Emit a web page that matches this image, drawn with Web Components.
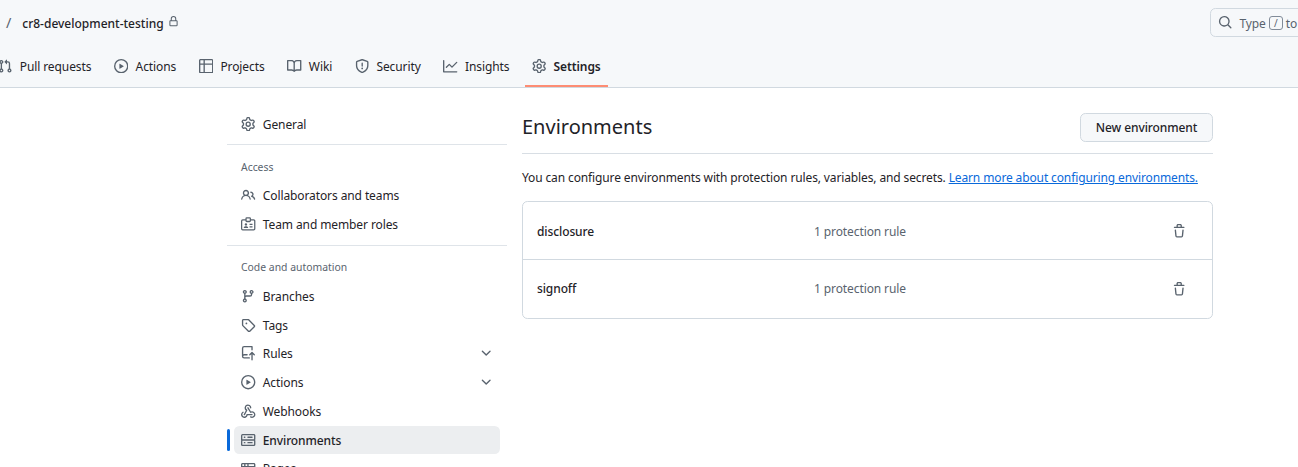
<!DOCTYPE html>
<html>
<head>
<meta charset="utf-8">
<title>Environments</title>
<style>
    html, body { margin: 0; height: 467px; overflow: hidden; background: #fff; }
    body { font: 12px "Noto Sans", sans-serif; letter-spacing: -.1px; color: #1f2328; }
</style>
</head>
<body>
<repo-header>
    <span slot="repo">cr8-development-testing</span>
    <repo-tab icon="pr">Pull requests</repo-tab>
    <repo-tab icon="play">Actions</repo-tab>
    <repo-tab icon="table">Projects</repo-tab>
    <repo-tab icon="book">Wiki</repo-tab>
    <repo-tab icon="shield">Security</repo-tab>
    <repo-tab icon="graph">Insights</repo-tab>
    <repo-tab icon="gear" active>Settings</repo-tab>
</repo-header>
<settings-page>
    <settings-nav slot="nav">
        <nav-item icon="gear">General</nav-item>
        <nav-divider></nav-divider>
        <nav-heading>Access</nav-heading>
        <nav-item icon="people">Collaborators and teams</nav-item>
        <nav-item icon="badge">Team and member roles</nav-item>
        <nav-divider></nav-divider>
        <nav-heading>Code and automation</nav-heading>
        <nav-item icon="branch">Branches</nav-item>
        <nav-item icon="tag">Tags</nav-item>
        <nav-item icon="push" expandable>Rules</nav-item>
        <nav-item icon="play" expandable>Actions</nav-item>
        <nav-item icon="webhook">Webhooks</nav-item>
        <nav-item icon="server" active>Environments</nav-item>
        <nav-item icon="browser">Pages</nav-item>
    </settings-nav>
    <env-panel>
        <env-row name="disclosure" rules="1 protection rule"></env-row>
        <env-row name="signoff" rules="1 protection rule"></env-row>
    </env-panel>
</settings-page>

<script>
const ICONS = {
    gear: '<path d="M8 0a8.2 8.2 0 0 1 .701.031C9.444.095 9.99.645 10.16 1.29l.288 1.107c.018.066.079.158.212.224.231.114.454.243.668.386.123.082.233.09.299.071l1.103-.303c.644-.176 1.392.021 1.82.63.27.385.506.792.704 1.218.315.675.111 1.422-.364 1.891l-.814.806c-.049.048-.098.147-.088.294.016.257.016.515 0 .772-.01.147.038.246.088.294l.814.806c.475.469.679 1.216.364 1.891a7.977 7.977 0 0 1-.704 1.217c-.428.61-1.176.807-1.82.63l-1.102-.302c-.067-.019-.177-.011-.3.071a5.909 5.909 0 0 1-.668.386c-.133.066-.194.158-.211.224l-.29 1.106c-.168.646-.715 1.196-1.458 1.26a8.006 8.006 0 0 1-1.402 0c-.743-.064-1.289-.614-1.458-1.26l-.289-1.106c-.018-.066-.079-.158-.212-.224a5.738 5.738 0 0 1-.668-.386c-.123-.082-.233-.09-.299-.071l-1.103.303c-.644.176-1.392-.021-1.82-.63a8.12 8.12 0 0 1-.704-1.218c-.315-.675-.111-1.422.363-1.891l.815-.806c.05-.048.098-.147.088-.294a6.214 6.214 0 0 1 0-.772c.01-.147-.038-.246-.088-.294l-.815-.806C.635 6.045.431 5.298.746 4.623a7.92 7.92 0 0 1 .704-1.217c.428-.61 1.176-.807 1.82-.63l1.102.302c.067.019.177.011.3-.071.214-.143.437-.272.668-.386.133-.066.194-.158.211-.224l.29-1.106C6.009.645 6.556.095 7.299.03 7.53.01 7.764 0 8 0Zm-.571 1.525c-.036.003-.108.036-.137.146l-.289 1.105c-.147.561-.549.967-.998 1.189-.173.086-.34.183-.5.29-.417.278-.97.423-1.529.27l-1.103-.303c-.109-.03-.175.016-.195.045-.22.312-.412.644-.573.99-.014.031-.021.11.059.19l.815.806c.411.406.562.957.53 1.456a4.709 4.709 0 0 0 0 .582c.032.499-.119 1.05-.53 1.456l-.815.806c-.081.08-.073.159-.059.19.162.346.353.677.573.989.02.03.085.076.195.046l1.102-.303c.56-.153 1.113-.008 1.53.27.161.107.328.204.501.29.447.222.85.629.997 1.189l.289 1.105c.029.109.101.143.137.146a6.6 6.6 0 0 0 1.142 0c.036-.003.108-.036.137-.146l.289-1.105c.147-.561.549-.967.998-1.189.173-.086.34-.183.5-.29.417-.278.97-.423 1.529-.27l1.103.303c.109.029.175-.016.195-.045.22-.313.411-.644.573-.99.014-.031.021-.11-.059-.19l-.815-.806c-.411-.406-.562-.957-.53-1.456a4.709 4.709 0 0 0 0-.582c-.032-.499.119-1.05.53-1.456l.815-.806c.081-.08.073-.159.059-.19a6.464 6.464 0 0 0-.573-.989c-.02-.03-.085-.076-.195-.046l-1.102.303c-.56.153-1.113.008-1.53-.27a4.44 4.44 0 0 0-.501-.29c-.447-.222-.85-.629-.997-1.189l-.289-1.105c-.029-.11-.101-.143-.137-.146a6.6 6.6 0 0 0-1.142 0ZM11 8a3 3 0 1 1-6 0 3 3 0 0 1 6 0ZM9.5 8a1.5 1.5 0 1 0-3.001.001A1.5 1.5 0 0 0 9.5 8Z"/>',
    play: '<path d="M8 0a8 8 0 1 1 0 16A8 8 0 0 1 8 0ZM1.5 8a6.5 6.5 0 1 0 13 0 6.5 6.5 0 0 0-13 0Zm4.879-2.773 4.264 2.559a.25.25 0 0 1 0 .428l-4.264 2.559A.25.25 0 0 1 6 10.559V5.442a.25.25 0 0 1 .379-.215Z"/>',
    table: '<path d="M0 1.75C0 .784.784 0 1.75 0h12.5C15.216 0 16 .784 16 1.75v12.5A1.75 1.75 0 0 1 14.25 16H1.75A1.75 1.75 0 0 1 0 14.25ZM6.5 6.5v8h7.75a.25.25 0 0 0 .25-.25V6.5Zm8-1.5V1.75a.25.25 0 0 0-.25-.25H6.5V5Zm-13 1.5v7.75c0 .138.112.25.25.25H5v-8ZM5 5V1.5H1.75a.25.25 0 0 0-.25.25V5Z"/>',
    book: '<path d="M0 1.75A.75.75 0 0 1 .75 1h4.253c1.227 0 2.317.59 3 1.501A3.743 3.743 0 0 1 11.006 1h4.245a.75.75 0 0 1 .75.75v10.5a.75.75 0 0 1-.75.75h-4.507a2.25 2.25 0 0 0-1.591.659l-.622.621a.75.75 0 0 1-1.06 0l-.622-.621A2.25 2.25 0 0 0 5.258 13H.75a.75.75 0 0 1-.75-.75Zm7.251 10.324.004-5.073-.002-2.253A2.25 2.25 0 0 0 5.003 2.5H1.5v9h3.757a3.75 3.75 0 0 1 1.994.574ZM8.755 4.75l-.004 7.322a3.752 3.752 0 0 1 1.992-.572H14.5v-9h-3.495a2.25 2.25 0 0 0-2.25 2.25Z"/>',
    shield: '<path d="M7.467.133a1.748 1.748 0 0 1 1.066 0l5.25 1.68A1.75 1.75 0 0 1 15 3.48V7c0 1.566-.32 3.182-1.303 4.682-.983 1.498-2.585 2.813-5.032 3.855a1.697 1.697 0 0 1-1.33 0c-2.447-1.042-4.049-2.357-5.032-3.855C1.32 10.182 1 8.566 1 7V3.48a1.75 1.75 0 0 1 1.217-1.667Zm.61 1.429a.25.25 0 0 0-.153 0l-5.25 1.68a.25.25 0 0 0-.174.238V7c0 1.358.275 2.666 1.057 3.86.784 1.194 2.121 2.34 4.366 3.297a.196.196 0 0 0 .154 0c2.245-.956 3.582-2.104 4.366-3.298C13.225 9.666 13.5 8.36 13.5 7V3.48a.251.251 0 0 0-.174-.237l-5.25-1.68ZM8.75 4.75v3a.75.75 0 0 1-1.5 0v-3a.75.75 0 0 1 1.5 0ZM9 10.5a1 1 0 1 1-2 0 1 1 0 0 1 2 0Z"/>',
    graph: '<path d="M1.5 1.75V13.5h13.75a.75.75 0 0 1 0 1.5H.75a.75.75 0 0 1-.75-.75V1.75a.75.75 0 0 1 1.5 0Zm14.28 2.53-5.25 5.25a.75.75 0 0 1-1.06 0L7 7.06 4.28 9.78a.751.751 0 0 1-1.042-.018.751.751 0 0 1-.018-1.042l3.25-3.25a.75.75 0 0 1 1.06 0L10 7.94l4.72-4.72a.751.751 0 0 1 1.042.018.751.751 0 0 1 .018 1.042Z"/>',
    pr: '<path d="M1.5 3.25a2.25 2.25 0 1 1 3 2.122v5.256a2.251 2.251 0 1 1-1.5 0V5.372A2.25 2.25 0 0 1 1.5 3.25Zm5.677-.177L9.573.677A.25.25 0 0 1 10 .854V2.5h1A2.5 2.5 0 0 1 13.5 5v5.628a2.251 2.251 0 1 1-1.5 0V5a1 1 0 0 0-1-1h-1v1.646a.25.25 0 0 1-.427.177L7.177 3.427a.25.25 0 0 1 0-.354ZM3.75 2.5a.75.75 0 1 0 0 1.5.75.75 0 0 0 0-1.5Zm0 9.5a.75.75 0 1 0 0 1.5.75.75 0 0 0 0-1.5Zm8.25.75a.75.75 0 1 0 1.5 0 .75.75 0 0 0-1.5 0Z"/>',
    lock: '<path d="M4 4a4 4 0 0 1 8 0v2h.25c.966 0 1.75.784 1.75 1.75v5.5A1.75 1.75 0 0 1 12.25 15h-8.5A1.75 1.75 0 0 1 2 13.25v-5.5C2 6.784 2.784 6 3.75 6H4Zm8.25 3.5h-8.5a.25.25 0 0 0-.25.25v5.5c0 .138.112.25.25.25h8.5a.25.25 0 0 0 .25-.25v-5.5a.25.25 0 0 0-.25-.25ZM10.5 6V4a2.5 2.5 0 1 0-5 0v2Z"/>',
    search: '<path d="M10.68 11.74a6 6 0 0 1-7.922-8.982 6 6 0 0 1 8.982 7.922l3.04 3.04a.749.749 0 0 1-.326 1.275.749.749 0 0 1-.734-.215ZM11.5 7a4.499 4.499 0 1 0-8.997 0A4.499 4.499 0 0 0 11.5 7Z"/>',
    people: '<path d="M2 5.5a3.5 3.5 0 1 1 5.898 2.549 5.508 5.508 0 0 1 3.034 4.084.75.75 0 1 1-1.482.235 4 4 0 0 0-7.9 0 .75.75 0 0 1-1.482-.236A5.507 5.507 0 0 1 3.102 8.05 3.493 3.493 0 0 1 2 5.5ZM11 4a3.001 3.001 0 0 1 2.22 5.018 5.01 5.01 0 0 1 2.56 3.012.749.749 0 0 1-.885.954.752.752 0 0 1-.549-.514 3.507 3.507 0 0 0-2.522-2.372.75.75 0 0 1-.574-.73v-.352a.75.75 0 0 1 .416-.672A1.5 1.5 0 0 0 11 5.5.75.75 0 0 1 11 4Zm-5.5-.5a2 2 0 1 0-.001 3.999A2 2 0 0 0 5.5 3.5Z"/>',
    badge: '<g fill="none" stroke="currentColor" stroke-width="1.4"><path d="M5.6 3.3H1.9c-.6 0-1.2.5-1.2 1.2v8.6c0 .6.5 1.2 1.2 1.2h12.2c.6 0 1.2-.5 1.2-1.2V4.5c0-.6-.5-1.2-1.2-1.2h-3.7"/><rect x="5.6" y="1" width="4.8" height="4" rx=".8"/><path d="M9.5 8.2h3.3M9.5 11h3.3"/></g><circle cx="5.5" cy="8.2" r="1.3"/><path d="M3 12.2c0-1.3 1-2 2.5-2s2.5.7 2.5 2z"/>',
    branch: '<path d="M9.5 3.25a2.25 2.25 0 1 1 3 2.122V6A2.5 2.5 0 0 1 10 8.5H6a1 1 0 0 0-1 1v1.128a2.251 2.251 0 1 1-1.5 0V5.372a2.25 2.25 0 1 1 1.5 0v1.836A2.493 2.493 0 0 1 6 7h4a1 1 0 0 0 1-1v-.628A2.25 2.25 0 0 1 9.5 3.25Zm-6 0a.75.75 0 1 0 1.5 0 .75.75 0 0 0-1.5 0Zm8.25-.75a.75.75 0 1 0 0 1.5.75.75 0 0 0 0-1.5ZM4.25 12a.75.75 0 1 0 0 1.5.75.75 0 0 0 0-1.5Z"/>',
    tag: '<path d="M1 7.775V2.75C1 1.784 1.784 1 2.75 1h5.025c.464 0 .91.184 1.238.513l6.25 6.25a1.75 1.75 0 0 1 0 2.474l-5.026 5.026a1.75 1.75 0 0 1-2.474 0l-6.25-6.25A1.752 1.752 0 0 1 1 7.775Zm1.5 0c0 .066.026.13.073.177l6.25 6.25a.25.25 0 0 0 .354 0l5.025-5.025a.25.25 0 0 0 0-.354l-6.25-6.25a.25.25 0 0 0-.177-.073H2.75a.25.25 0 0 0-.25.25ZM6 5a1 1 0 1 1 0 2 1 1 0 0 1 0-2Z"/>',
    push: '<path d="M1 2.5A2.5 2.5 0 0 1 3.5 0h8.75a.75.75 0 0 1 .75.75v3.5a.75.75 0 0 1-1.5 0V1.5h-8a1 1 0 0 0-1 1v6.708A2.493 2.493 0 0 1 3.5 9h3.25a.75.75 0 0 1 0 1.5H3.5a1 1 0 0 0 0 2h5.75a.75.75 0 0 1 0 1.5H3.5A2.5 2.5 0 0 1 1 11.5Zm13.23 7.79h-.001l-1.224-1.224v6.184a.75.75 0 0 1-1.5 0V9.066L10.28 10.29a.75.75 0 0 1-1.06-1.061l2.505-2.504a.75.75 0 0 1 1.06 0L15.29 9.23a.751.751 0 0 1-.018 1.042.751.751 0 0 1-1.042.018Z"/>',
    webhook: '<path d="M5.5 4.25a2.25 2.25 0 0 1 4.5 0 .75.75 0 0 0 1.5 0 3.75 3.75 0 1 0-6.14 2.889l-2.272 4.258a.75.75 0 0 0 1.324.706L7 7.25a.75.75 0 0 0-.309-1.015A2.25 2.25 0 0 1 5.5 4.25Z"/><path d="M7.364 3.607a.75.75 0 0 1 1.03.257l2.608 4.349a3.75 3.75 0 1 1-.628 6.785.75.75 0 0 1 .752-1.299 2.25 2.25 0 1 0-.033-3.88.75.75 0 0 1-1.03-.256L7.107 4.636a.75.75 0 0 1 .257-1.03Z"/><path d="M2.9 8.776A.75.75 0 0 1 2.625 9.8 2.25 2.25 0 1 0 6 11.75a.75.75 0 0 1 .75-.751h5.5a.75.75 0 0 1 0 1.5H7.425a3.751 3.751 0 1 1-5.55-3.998.75.75 0 0 1 1.024.274Z"/>',
    server: '<path d="M1.75 1h12.5c.966 0 1.75.784 1.75 1.75v4c0 .372-.116.717-.314 1 .198.283.314.628.314 1v4a1.75 1.75 0 0 1-1.75 1.75H1.75A1.75 1.75 0 0 1 0 13.75v-4c0-.372.116-.717.314-1a1.739 1.739 0 0 1-.314-1v-4C0 1.784.784 1 1.75 1ZM1.5 2.75v4c0 .138.112.25.25.25h12.5a.25.25 0 0 0 .25-.25v-4a.25.25 0 0 0-.25-.25H1.75a.25.25 0 0 0-.25.25Zm.25 5.75a.25.25 0 0 0-.25.25v4c0 .138.112.25.25.25h12.5a.25.25 0 0 0 .25-.25v-4a.25.25 0 0 0-.25-.25ZM7 4.75A.75.75 0 0 1 7.75 4h4.5a.75.75 0 0 1 0 1.5h-4.5A.75.75 0 0 1 7 4.75ZM7.75 10h4.5a.75.75 0 0 1 0 1.5h-4.5a.75.75 0 0 1 0-1.5ZM3 4.75A.75.75 0 0 1 3.75 4h.5a.75.75 0 0 1 0 1.5h-.5A.75.75 0 0 1 3 4.75ZM3.75 10h.5a.75.75 0 0 1 0 1.5h-.5a.75.75 0 0 1 0-1.5Z"/>',
    browser: '<path d="M0 2.75C0 1.784.784 1 1.75 1h12.5c.966 0 1.75.784 1.75 1.75v10.5A1.75 1.75 0 0 1 14.25 15H1.75A1.75 1.75 0 0 1 0 13.25ZM14.5 6h-13v7.25c0 .138.112.25.25.25h12.5a.25.25 0 0 0 .25-.25Zm-6-3.5v2h6V2.75a.25.25 0 0 0-.25-.25ZM5 2.5v2h2v-2Zm-3.25 0a.25.25 0 0 0-.25.25V4.5h2v-2Z"/>',
    chevron: '<path d="M12.78 5.22a.749.749 0 0 1 0 1.06l-4.25 4.25a.749.749 0 0 1-1.06 0L3.22 6.28a.749.749 0 1 1 1.06-1.06L8 8.939l3.72-3.719a.749.749 0 0 1 1.06 0Z"/>',
    trash: '<path d="M11 1.75V3h2.25a.75.75 0 0 1 0 1.5H2.75a.75.75 0 0 1 0-1.5H5V1.75C5 .784 5.784 0 6.75 0h2.5C10.216 0 11 .784 11 1.75ZM4.496 6.675l.66 6.6a.25.25 0 0 0 .249.225h5.19a.25.25 0 0 0 .249-.225l.66-6.6a.75.75 0 0 1 1.492.149l-.66 6.6A1.748 1.748 0 0 1 10.595 15h-5.19a1.75 1.75 0 0 1-1.741-1.575l-.66-6.6a.75.75 0 1 1 1.492-.15ZM6.5 1.75V3h3V1.75a.25.25 0 0 0-.25-.25h-2.5a.25.25 0 0 0-.25.25Z"/>'
};

class GhIcon extends HTMLElement {
    constructor() {
        super();
        this.shadow = this.attachShadow({ mode: 'open' });
    }
    get name() {
        return this.getAttribute('name');
    }
    get size() {
        return Number(this.getAttribute('size') || 14.4);
    }
    connectedCallback() {
        this.shadow.innerHTML = `
            <style>
                :host { display: inline-flex; flex: none; color: #59636e; }
                svg { display: block; fill: currentColor; }
            </style>
            <svg width="${this.size}" height="${this.size}" viewBox="0 0 16 16">${ICONS[this.name]}</svg>
        `;
    }
}
customElements.define('gh-icon', GhIcon);

class RepoHeader extends HTMLElement {
    constructor() {
        super();
        this.shadow = this.attachShadow({ mode: 'open' });
    }
    connectedCallback() {
        this.shadow.innerHTML = `
            <style>
                :host {
                    display: block;
                    height: 87px;
                    background: #f6f8fa;
                    border-bottom: 1px solid #d1d9e0;
                    overflow: hidden;
                }
                .top {
                    display: flex;
                    align-items: center;
                    height: 29px;
                    padding: 8px 0 0 6px;
                }
                .slash { color: #59636e; font-size: 14.4px; margin-right: 11px; }
                .repo { font-weight: 500; letter-spacing: 0; white-space: nowrap; margin: 1px 4px 0 0; }
                .lock { margin-bottom: 3px; }
                .search {
                    flex: none;
                    box-sizing: border-box;
                    display: flex;
                    align-items: center;
                    gap: 7px;
                    width: 300px;
                    height: 29px;
                    margin-left: auto;
                    margin-right: -212px;
                    padding-left: 7px;
                    border: 1px solid #d1d9e0;
                    border-radius: 5.4px;
                    color: #59636e;
                    white-space: nowrap;
                }
                .search span { display: flex; align-items: center; gap: 3px; padding-top: 1px; }
                kbd {
                    box-sizing: border-box;
                    width: 14px;
                    height: 14px;
                    border: 1px solid #818b98;
                    border-radius: 3px;
                    font: inherit;
                    font-size: 10px;
                    line-height: 12px;
                    text-align: center;
                }
                nav {
                    display: flex;
                    margin: 8px 0 0 -9px;
                    gap: 8.3px;
                }
            </style>
            <div class="top">
                <span class="slash">/</span>
                <span class="repo"><slot name="repo"></slot></span>
                <gh-icon class="lock" name="lock" size="11"></gh-icon>
                <div class="search">
                    <gh-icon name="search"></gh-icon>
                    <span>Type <kbd>/</kbd> to search</span>
                </div>
            </div>
            <nav><slot></slot></nav>
        `;
    }
}
customElements.define('repo-header', RepoHeader);

class RepoTab extends HTMLElement {
    constructor() {
        super();
        this.shadow = this.attachShadow({ mode: 'open' });
    }
    connectedCallback() {
        this.shadow.innerHTML = `
            <style>
                :host {
                    display: flex;
                    align-items: center;
                    gap: 7.2px;
                    height: 42px;
                    padding: 0 7.2px;
                    box-sizing: border-box;
                    white-space: nowrap;
                }
                :host([active]) {
                    font-weight: 600;
                    box-shadow: inset 0 -2px 0 #fd8c73;
                }
            </style>
            <gh-icon name="${this.getAttribute('icon')}"></gh-icon>
            <slot></slot>
        `;
    }
}
customElements.define('repo-tab', RepoTab);

class SettingsPage extends HTMLElement {
    constructor() {
        super();
        this.shadow = this.attachShadow({ mode: 'open' });
    }
    connectedCallback() {
        this.shadow.innerHTML = `
            <style>
                :host {
                    display: flex;
                    align-items: flex-start;
                    padding: 22px 0 0 227px;
                }
                ::slotted([slot="nav"]) { margin-right: 15px; }
            </style>
            <slot name="nav"></slot>
            <slot></slot>
        `;
    }
}
customElements.define('settings-page', SettingsPage);

class SettingsNav extends HTMLElement {
    constructor() {
        super();
        this.attachShadow({ mode: 'open' }).innerHTML = `
            <style>
                :host { display: flex; flex-direction: column; flex: none; width: 280px; gap: .8px; }
            </style>
            <slot></slot>
        `;
    }
}
customElements.define('settings-nav', SettingsNav);

class NavItem extends HTMLElement {
    constructor() {
        super();
        this.shadow = this.attachShadow({ mode: 'open' });
    }
    connectedCallback() {
        this.shadow.innerHTML = `
            <style>
                :host {
                    display: flex;
                    align-items: center;
                    gap: 7.2px;
                    position: relative;
                    flex: none;
                    box-sizing: border-box;
                    width: 266px;
                    height: 28px;
                    margin-left: 7px;
                    padding: 0 6.6px 0 7.2px;
                    border-radius: 5.4px;
                    white-space: nowrap;
                }
                :host([active]) { background: #eceef0; font-weight: 500; }
                :host([active])::before {
                    content: '';
                    position: absolute;
                    left: -7px;
                    top: 3px;
                    bottom: 3px;
                    width: 3px;
                    border-radius: 2px;
                    background: #0969da;
                }
                .label { flex: 1; padding-top: .5px; }
            </style>
            <gh-icon name="${this.getAttribute('icon')}"></gh-icon>
            <span class="label"><slot></slot></span>
            ${this.hasAttribute('expandable') ? '<gh-icon name="chevron"></gh-icon>' : ''}
        `;
    }
}
customElements.define('nav-item', NavItem);

class NavDivider extends HTMLElement {
    constructor() {
        super();
        this.attachShadow({ mode: 'open' }).innerHTML = `
            <style>
                :host { display: block; flex: none; height: 1px; margin: 5.5px 0; background: #d1d9e0; opacity: .7; }
            </style>
        `;
    }
}
customElements.define('nav-divider', NavDivider);

class NavHeading extends HTMLElement {
    constructor() {
        super();
        this.attachShadow({ mode: 'open' }).innerHTML = `
            <style>
                :host {
                    display: flex;
                    align-items: center;
                    flex: none;
                    box-sizing: border-box;
                    height: 29.2px;
                    padding: 1px 0 0 14px;
                    font-size: 10.4px;
                    letter-spacing: 0;
                    color: #59636e;
                }
            </style>
            <slot></slot>
        `;
    }
}
customElements.define('nav-heading', NavHeading);

class EnvPanel extends HTMLElement {
    constructor() {
        super();
        this.shadow = this.attachShadow({ mode: 'open' });
    }
    connectedCallback() {
        this.shadow.innerHTML = `
            <style>
                :host { display: block; flex: none; width: 691px; margin-top: 3px; }
                .head {
                    display: flex;
                    align-items: flex-start;
                    justify-content: space-between;
                    box-sizing: border-box;
                    height: 41px;
                    border-bottom: 1px solid #d8dee4;
                }
                h2 { margin: 0; font-size: 20px; font-weight: 400; line-height: 28px; letter-spacing: 0; }
                button {
                    box-sizing: border-box;
                    height: 29px;
                    width: 133px;
                    padding: 0;
                    font: 500 12px "Noto Sans", sans-serif;
                    letter-spacing: inherit;
                    color: #1f2328;
                    background: #f6f8fa;
                    border: 1px solid #d1d9e0;
                    border-radius: 5.4px;
                }
                p { margin: 15px 0 14px; line-height: 18px; letter-spacing: -.125px; white-space: nowrap; }
                a { color: #0969da; text-decoration: underline; }
                .box { border: 1px solid #d1d9e0; border-radius: 5.4px; }
            </style>
            <div class="head">
                <h2>Environments</h2>
                <button>New environment</button>
            </div>
            <p>You can configure environments with protection rules, variables, and secrets. <a>Learn more about configuring environments.</a></p>
            <div class="box"><slot></slot></div>
        `;
    }
}
customElements.define('env-panel', EnvPanel);

class EnvRow extends HTMLElement {
    constructor() {
        super();
        this.shadow = this.attachShadow({ mode: 'open' });
    }
    connectedCallback() {
        this.shadow.innerHTML = `
            <style>
                :host {
                    display: grid;
                    grid-template-columns: 277px 1fr auto;
                    align-items: center;
                    box-sizing: border-box;
                    height: 58px;
                    padding: 0 26px 0 14px;
                }
                :host(:first-child) { padding-top: 1px; }
                :host(:last-child) span { margin-bottom: 1px; }
                :host(:not(:last-child)) { border-bottom: 1px solid #d1d9e0; }
                .name { font-weight: 500; }
                .rules { color: #59636e; }
            </style>
            <span class="name">${this.getAttribute('name')}</span>
            <span class="rules">${this.getAttribute('rules')}</span>
            <gh-icon name="trash"></gh-icon>
        `;
    }
}
customElements.define('env-row', EnvRow);
</script>
</body>
</html>
